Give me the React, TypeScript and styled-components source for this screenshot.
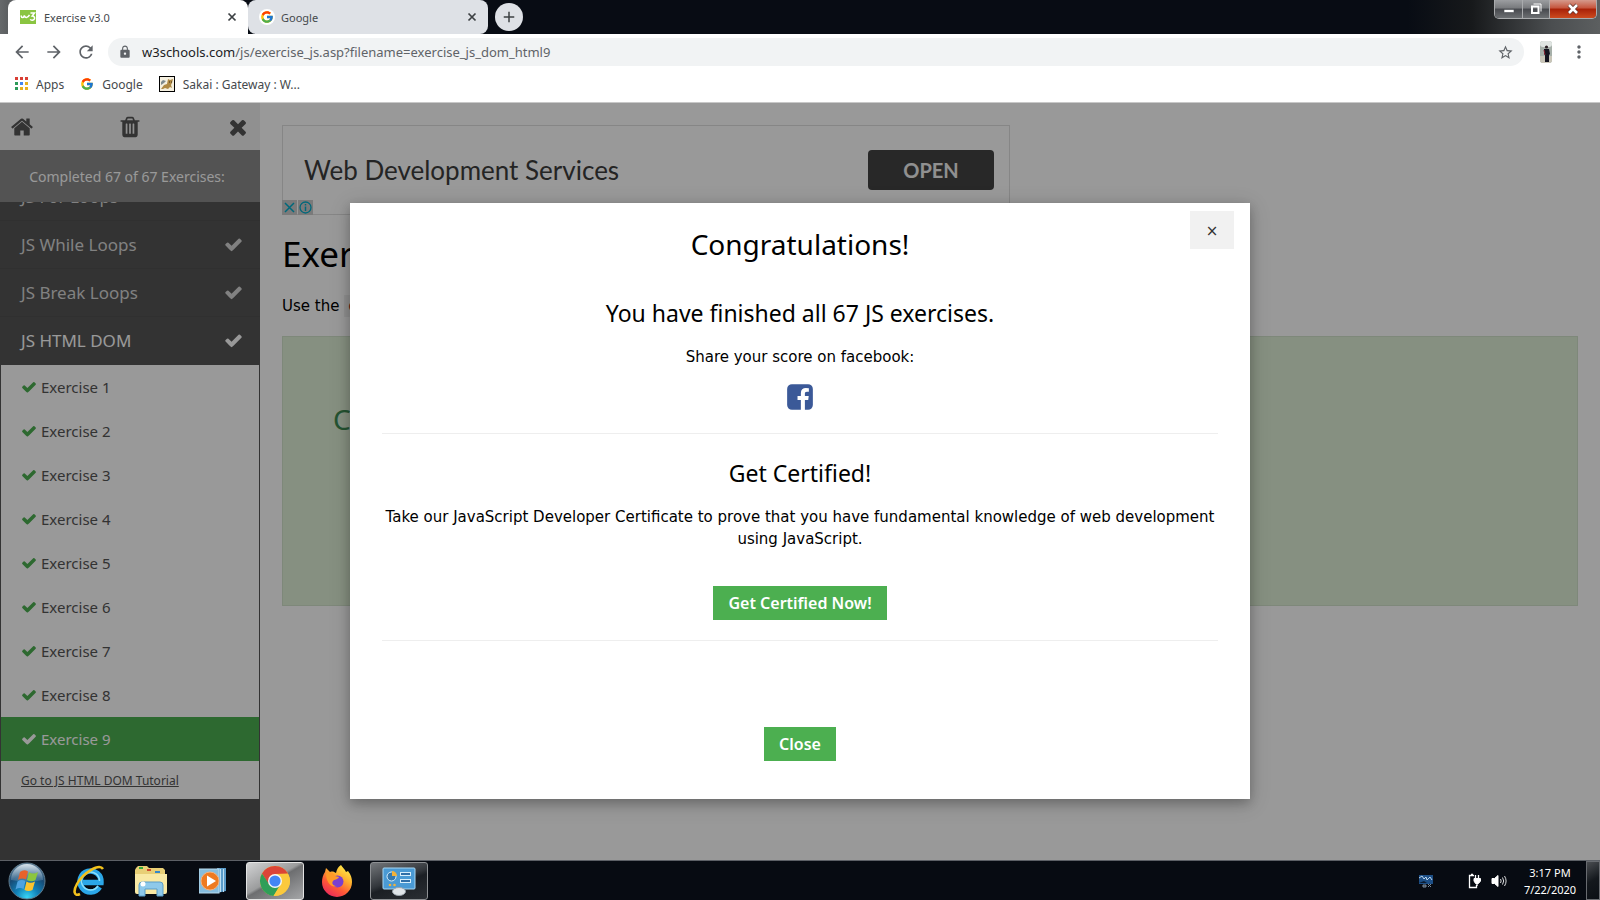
import React from "react";
import styled, { createGlobalStyle, css } from "styled-components";
import { FcGoogle } from "react-icons/fc";
import { MdArrowBack, MdArrowForward, MdRefresh, MdLock, MdStarBorder, MdMoreVert, MdAdd } from "react-icons/md";

const ui = `"Noto Sans", "Segoe UI", sans-serif`;
const body = `"DejaVu Sans", Verdana, sans-serif`;

const GlobalStyle = createGlobalStyle`
  * { box-sizing: border-box; }
  body { margin: 0; font-family: ${ui}; color: #000; background: #fff; }
  button { border: 0; padding: 0; margin: 0; background: none; font-family: inherit; cursor: pointer; }
  a { color: inherit; text-decoration: none; }
  h1, h2, h3, p, ul { margin: 0; padding: 0; font-weight: 400; }
  ul { list-style: none; }
  svg { display: block; flex: none; }
`;

const Desktop = styled.div`
  display: flex;
  flex-direction: column;
  min-height: 100vh;
`;

/* ---------- browser window ---------- */

const TabStrip = styled.div`
  display: flex;
  height: 34px;
  padding-left: 8px;
  background: linear-gradient(90deg, #66696b 0, #5c5f61 8px, #080c14 240px, #080c14 88%, #17191b 92%, #4b4e50 97%, #5c5f60 100%);
`;

const Tab = styled.div<{ $active?: boolean }>`
  display: flex;
  align-items: center;
  width: 240px;
  height: 34px;
  padding: 0 10px 0 ${(p) => (p.$active ? 12 : 11)}px;
  gap: ${(p) => (p.$active ? 8 : 6)}px;
  color: #45494d;
  font-size: 11px;
  background: ${(p) => (p.$active ? "#fff" : "#dee1e6")};
  border-radius: ${(p) => (p.$active ? "8px 8px 0 0" : "8px")};
  & > span { flex: 1; }
`;

const IconButton = styled.button`
  display: flex;
  align-items: center;
  justify-content: center;
  color: #5f6368;
`;

const NewTab = styled(IconButton)`
  width: 28px;
  height: 28px;
  margin: 3px 0 0 7px;
  border-radius: 50%;
  background: #dee1e6;
  color: #3c4043;
`;

const WindowButtons = styled.div`
  display: flex;
  height: 19px;
  margin: 0 3px 0 auto;
  border: 1px solid #a9abad;
  border-top: 0;
  border-radius: 0 0 5px 5px;
  overflow: hidden;
`;

const WindowButton = styled.button<{ $close?: boolean }>`
  display: flex;
  align-items: center;
  justify-content: center;
  width: ${(p) => (p.$close ? 47 : 27)}px;
  background: ${(p) =>
    p.$close
      ? "linear-gradient(#d59a8c 0, #c5543c 45%, #a82108 50%, #cc4a1e 100%)"
      : "linear-gradient(#9c9ea1 0, #77797c 45%, #47494e 50%, #6c6f72 100%)"};
  & + & { border-left: 1px solid #a9abad; }
`;

const Toolbar = styled.div`
  display: flex;
  align-items: center;
  height: 36px;
  padding: 0 11px 0 10px;
  background: #fff;
`;

const NavButton = styled(IconButton)`
  width: 24px;
  height: 24px;
  margin-right: 8px;
`;

const AddressBar = styled.div`
  display: flex;
  flex: 1;
  align-items: center;
  height: 28px;
  margin-left: 2px;
  padding: 0 10px;
  border-radius: 14px;
  background: #f1f3f4;
  color: #5f6368;
  font-size: 13px;
`;

const Url = styled.span`
  flex: 1;
  margin-left: 10px;
  b { color: #202124; font-weight: 400; }
`;

const Avatar = styled.span`
  margin: 0 17px 0 16px;
`;

const BookmarksBar = styled.nav`
  display: flex;
  align-items: center;
  gap: 16px;
  height: 33px;
  padding: 0 14px 4px;
  border-bottom: 1px solid #c8c8c8;
  background: #fff;
  color: #45494d;
  font-size: 12px;
`;

const Bookmark = styled.a`
  display: flex;
  align-items: center;
  gap: 8px;
`;

/* ---------- web page ---------- */

const Page = styled.div`
  position: relative;
  display: flex;
  flex: 1;
  background: #fff;
`;

const Sidebar = styled.aside`
  display: flex;
  flex-direction: column;
  width: 260px;
  background: #555;
`;

const SidebarTools = styled.div`
  display: flex;
  align-items: center;
  justify-content: space-between;
  height: 47px;
  padding: 0 10px;
  background: #f1f1f1;
`;

const ToolButton = styled(IconButton)`
  color: #555;
`;

const Completed = styled.div`
  height: 52px;
  background: #8a8a8a;
  color: #fff;
  font-size: 14px;
  line-height: 54px;
  text-align: center;
  padding-right: 6px;
`;

const Chapters = styled.div`
  display: flex;
  flex-direction: column;
  justify-content: flex-end;
  height: 163px;
  padding-bottom: 1px;
  overflow: hidden;
`;

const Chapter = styled.a<{ $open?: boolean }>`
  display: flex;
  flex: none;
  align-items: center;
  justify-content: space-between;
  height: 48px;
  padding: 0 17px 0 21px;
  border-top: 1px solid #505050;
  color: ${(p) => (p.$open ? "#fff" : "#d8d8d8")};
  font-size: 17px;
`;

const ExerciseList = styled.ul`
  margin: 0 1px;
  background: #fff;
`;

const Exercise = styled.a<{ $current?: boolean }>`
  display: flex;
  align-items: center;
  gap: 4px;
  height: 44px;
  padding-left: 20px;
  font-size: 15px;
  color: #555;
  svg { color: #4caf50; }
  ${(p) => p.$current && css`
    background: #4caf50;
    color: #fff;
    svg { color: #fff; }
  `}
`;

const TutorialLink = styled.a`
  display: block;
  height: 38px;
  padding-left: 20px;
  color: #555;
  font-size: 12px;
  line-height: 40px;
  && { text-decoration: underline; }
`;

const Main = styled.main`
  flex: 1;
  min-width: 0;
  padding: 22px 22px 0;
`;

const Ad = styled.section`
  display: flex;
  align-items: center;
  justify-content: space-between;
  position: relative;
  max-width: 728px;
  height: 90px;
  padding: 0 15px 0 21px;
  border: 1px solid #e0e0e0;
  color: #3c3c3c;
  font-family: Lato, sans-serif;
  font-size: 26px;
`;

const AdOpen = styled.button`
  width: 126px;
  height: 40px;
  border-radius: 4px;
  background: #434343;
  color: #f1f1f1;
  font-size: 20px;
  font-weight: 700;
`;

const AdBadges = styled.div`
  position: absolute;
  left: -1px;
  bottom: -1px;
  display: flex;
  gap: 1px;
  svg { background: #ccc; }
`;

const PageTitle = styled.h1`
  margin-top: 13px;
  font-size: 35px;
  line-height: 52px;
`;

const Task = styled.p`
  margin-top: 15px;
  font-family: ${body};
  font-size: 15px;
  line-height: 22px;
  code { padding: 2px 4px; background: #f1f1f1; color: #a52a2a; font-size: 15px; }
`;

const Answer = styled.section`
  height: 270px;
  margin-top: 19px;
  padding: 60px 50px;
  background: #dff0d8;
  border: 1px solid #d2e3cb;
  color: #3c8a52;
  font-size: 28px;
  line-height: 44px;
`;

/* ---------- congratulation dialog ---------- */

const Backdrop = styled.div`
  position: absolute;
  inset: 0;
  padding-top: 100px;
  background: rgba(0, 0, 0, 0.4);
`;

const Dialog = styled.div`
  position: relative;
  display: flex;
  flex-direction: column;
  align-items: center;
  max-width: 900px;
  margin: 0 auto;
  padding: 19px 32px 38px;
  background: #fff;
  box-shadow: 0 4px 10px rgba(0, 0, 0, 0.2), 0 4px 20px rgba(0, 0, 0, 0.19);
  text-align: center;
`;

const DialogX = styled.button`
  position: absolute;
  top: 8px;
  right: 16px;
  width: 44px;
  height: 38px;
  padding-top: 2px;
  background: #f1f1f1;
  color: #333;
  font-family: ${body};
  font-size: 15px;
`;

const DialogTitle = styled.h2`
  font-size: 28px;
  line-height: 44px;
`;

const Subtitle = styled.h3<{ $gap: number }>`
  margin-top: ${(p) => p.$gap}px;
  font-size: 23px;
  line-height: 36px;
`;

const Paragraph = styled.p`
  margin-top: 15px;
  font-family: ${body};
  font-size: 15px;
  line-height: 22px;
`;

const FacebookLink = styled.a`
  margin: 14px 0 1px;
  color: #3b5998;
`;

const Rule = styled.hr`
  align-self: stretch;
  margin: 20px 0 0;
  border: 0;
  border-top: 1px solid #eee;
`;

const GreenButton = styled.button<{ $gap: number }>`
  height: 34px;
  margin-top: ${(p) => p.$gap}px;
  padding: 0 15px;
  background: #4caf50;
  color: #fff;
  font-size: 16px;
  font-weight: 600;
`;

/* ---------- taskbar ---------- */

const Taskbar = styled.footer`
  display: flex;
  align-items: center;
  height: 40px;
  border-top: 1px solid #5c6066;
  background: #070b12;
`;

const StartButton = styled(IconButton)`
  width: 54px;
  margin-right: 6px;
`;

const TaskButton = styled(IconButton)<{ $state?: "active" | "open" }>`
  width: 58px;
  height: 38px;
  margin-right: 4px;
  border-radius: 3px;
  ${(p) => p.$state === "active" && css`
    border: 1px solid #e4e4e4;
    background: linear-gradient(150deg, #d2d3d4 0, #9b9c9d 45%, #6d6e70 50%, #a5a6a8 100%);
  `}
  ${(p) => p.$state === "open" && css`
    border: 1px solid #8d9093;
    background: linear-gradient(160deg, #73767a 0, #33373c 45%, #1b1f24 55%, #2a2e33 100%);
  `}
`;

const Tray = styled.div`
  display: flex;
  align-items: center;
  margin-left: auto;
  color: #fff;
`;

const TrayIcon = styled(IconButton)<{ $gap: number }>`
  margin-right: ${(p) => p.$gap}px;
`;

const Clock = styled.div`
  margin-right: 9px;
  width: 54px;
  font-size: 11px;
  line-height: 17px;
  text-align: center;
  white-space: nowrap;
`;

const ShowDesktop = styled.button`
  width: 14px;
  height: 39px;
  border: 1px solid #686b70;
  background: linear-gradient(150deg, #4a4d51, #14181d 50%, #0b0f15);
`;

/* ---------- icons ---------- */

const paths = {
  home: "M1472 992v480q0 26-19 45t-45 19h-384v-384h-256v384h-384q-26 0-45-19t-19-45v-480q0-1 .5-3t.5-3l575-474 575 474q1 2 1 6zm223-69l-62 74q-8 9-21 11h-3q-13 0-21-7l-692-577-692 577q-12 8-24 7-13-2-21-11l-62-74q-8-10-7-23.5t11-21.5l719-599q32-26 76-26t76 26l244 204v-195q0-14 9-23t23-9h192q14 0 23 9t9 23v408l219 182q10 8 11 21.5t-7 23.5z",
  trash: "M704 1376v-704q0-14-9-23t-23-9h-64q-14 0-23 9t-9 23v704q0 14 9 23t23 9h64q14 0 23-9t9-23zm256 0v-704q0-14-9-23t-23-9h-64q-14 0-23 9t-9 23v704q0 14 9 23t23 9h64q14 0 23-9t9-23zm256 0v-704q0-14-9-23t-23-9h-64q-14 0-23 9t-9 23v704q0 14 9 23t23 9h64q14 0 23-9t9-23zm-544-992h448l-48-117q-7-9-17-11h-317q-10 2-17 11zm928 32v64q0 14-9 23t-23 9h-96v948q0 83-47 143.5t-113 60.5h-832q-66 0-113-58.5t-47-141.5v-952h-96q-14 0-23-9t-9-23v-64q0-14 9-23t23-9h309l70-167q15-37 54-63t79-26h320q40 0 79 26t54 63l70 167h309q14 0 23 9t9 23z",
  times: "M1490 1322q0 40-28 68l-136 136q-28 28-68 28t-68-28l-294-294-294 294q-28 28-68 28t-68-28l-136-136q-28-28-28-68t28-68l294-294-294-294q-28-28-28-68t28-68l136-136q28-28 68-28t68 28l294 294 294-294q28-28 68-28t68 28l136 136q28 28 28 68t-28 68l-294 294 294 294q28 28 28 68z",
  check: "M1671 566q0 40-28 68l-724 724-136 136q-28 28-68 28t-68-28l-136-136-362-362q-28-28-28-68t28-68l136-136q28-28 68-28t68 28l294 295 656-657q28-28 68-28t68 28l136 136q28 28 28 68z",
  facebook: "M1376 128q119 0 203.5 84.5t84.5 203.5v960q0 119-84.5 203.5t-203.5 84.5h-188v-595h199l30-232h-229v-148q0-56 23.5-84t91.5-28l122-1v-207q-63-9-178-9-136 0-217.5 80t-81.5 226v171h-200v232h200v595h-532q-119 0-203.5-84.5t-84.5-203.5v-960q0-119 84.5-203.5t203.5-84.5h960z",
};

const Glyph = ({ name, size }: { name: keyof typeof paths; size: number }) => (
  <svg width={size} height={size} viewBox="0 0 1792 1792" fill="currentColor" aria-hidden="true">
    <path d={paths[name]} />
  </svg>
);

const W3Icon = () => (
  <svg width="16" height="16" viewBox="0 0 16 16" fill="none">
    <rect y="1" width="16" height="14" fill="#8ac541" />
    <path d="M1 6.500c.6 2.800 2.600 2.800 3.300 0 .7 2.800 3.500 2.800 5.200-.6" stroke="#fff" strokeWidth="1.500" />
    <path d="M10.500 4h4l-2.300 3c3.400 0 3 4.500-.2 4.200-1 0-1.500-.5-1.700-1" stroke="#fff" strokeWidth="1.500" />
  </svg>
);

const TabClose = () => (
  <svg width="12" height="12" viewBox="0 0 12 12" fill="none">
    <path d="M2.500 2.500l7 7M9.500 2.500l-7 7" stroke="#3c4043" strokeWidth="1.700" />
  </svg>
);

const AppsIcon = () => {
  const colors = ["#d93f35", "#d93f35", "#d93f35", "#2c9a58", "#4285f4", "#e8b020", "#2c9a58", "#e8b020", "#e8b020"];
  return (
    <svg width="14" height="14" viewBox="0 0 14 14">
      {colors.map((c, i) => (
        <rect key={i} x={(i % 3) * 5 + 1} y={Math.floor(i / 3) * 5} width="3" height="3" fill={c} />
      ))}
    </svg>
  );
};

const SakaiIcon = () => (
  <svg width="16" height="16" viewBox="0 0 16 16">
    <rect x=".5" y=".5" width="15" height="15" fill="#f5f0e0" stroke="#000" />
    <path d="M2 13l3-4 3-1 1-5 2 1 3-1-1 4-1 2 1 3-2-1-2 2-3-1-2 1z" fill="#b08a45" />
    <path d="M2 6l2-2 3 1-2 2-3 2z" fill="#7f8b90" />
    <path d="M10 6h1M12 6h1" stroke="#3d2c12" />
  </svg>
);

const AvatarIcon = () => (
  <svg width="12" height="22" viewBox="0 0 12 22">
    <rect width="12" height="22" rx="3" fill="#a7b0aa" />
    <rect width="12" height="6" rx="3" fill="#e0e5e2" />
    <path d="M0 15h12v4q0 3-3 3H3q-3 0-3-3z" fill="#c9c5b8" />
    <circle cx="6.500" cy="6" r="1.600" fill="#2b1f25" />
    <path d="M4 8h5l1 5-1 1v7H5v-7l-1-1z" fill="#15141f" />
    <path d="M4 9l1 5" stroke="#8c2536" />
  </svg>
);

const StartOrb = () => (
  <svg width="38" height="38" viewBox="0 0 38 38">
    <defs>
      <radialGradient id="orb" cx=".5" cy=".95" r=".9">
        <stop offset="0" stopColor="#38d5f5" />
        <stop offset=".35" stopColor="#1181b8" />
        <stop offset=".7" stopColor="#174a74" />
        <stop offset="1" stopColor="#5c7d97" />
      </radialGradient>
      <linearGradient id="gloss" x2="0" y2="1">
        <stop offset="0" stopColor="#e6eef4" stopOpacity=".9" />
        <stop offset="1" stopColor="#8fb0c9" stopOpacity=".25" />
      </linearGradient>
    </defs>
    <circle cx="19" cy="19" r="18" fill="url(#orb)" stroke="#5f7a8c" />
    <path d="M3 18a16 16 0 0 1 32 0q-15 3-32 0z" fill="url(#gloss)" />
    <path d="M12 10q4-3 8-.5l-2 8q-4-2-8 .5z" fill="#e8622a" />
    <path d="M21 10q4 3 9 0l-2.500 8q-4 2.500-8.500 0z" fill="#8cc63e" />
    <path d="M9.500 19.500q4-2.500 8-.5l-2 8q-4-2-8 .5z" fill="#4fa3e0" />
    <path d="M18.500 19.500q4 2.500 8.500 0l-2.500 8.500q-4 2-8 0z" fill="#fcc42e" />
  </svg>
);

const IEIcon = () => (
  <svg width="32" height="32" viewBox="0 0 32 32" fill="none">
    <path d="M26.500 22A10.500 10.500 0 1 1 28 17.500H10" stroke="#2ba7e8" strokeWidth="5.500" />
    <path d="M25 21A9 9 0 1 1 26.500 16" stroke="#8be0fb" strokeWidth="1.500" />
    <path d="M30 4c-4-6-20 4-26 15-4 7-3 13 3 10" stroke="#f2c11c" strokeWidth="2.600" />
  </svg>
);

const ExplorerIcon = () => (
  <svg width="34" height="32" viewBox="0 0 34 32">
    <path d="M2 3l2-2h9l2 2h14l2 2v22H1V5z" fill="#e8cf76" />
    <rect x="5" y="2" width="4" height="2" fill="#35a83a" />
    <rect x="13" y="4" width="4" height="2" fill="#cf4a2f" />
    <rect x="21" y="6" width="5" height="2" fill="#3588c9" />
    <path d="M1 9h32v18q0 2-2 2H3q-2 0-2-2z" fill="#f9e9a4" />
    <path d="M5 31V20q0-3 3-3h18q3 0 3 3v11h-6v-7H11v7z" fill="#8ec9ea" stroke="#5b9dc8" />
    <circle cx="9" cy="19" r="2.500" fill="#fff" />
  </svg>
);

const MediaIcon = () => (
  <svg width="28" height="26" viewBox="0 0 28 26">
    <path d="M18 0h9v23l-9 2z" fill="#5b9cc9" />
    <path d="M21.500 1v23M24.500 1v23" stroke="#bfe0f2" />
    <rect y="1" width="20" height="24" fill="#86bddd" stroke="#b9dbed" />
    <circle cx="11" cy="13" r="9" fill="#ee7a20" stroke="#f7b27a" />
    <path d="M8 7.500v11l9-5.500z" fill="#fff" />
  </svg>
);

const ChromeIcon = () => (
  <svg width="32" height="32" viewBox="0 0 32 32">
    <circle cx="16" cy="16" r="15" fill="#fbc93c" />
    <path d="M3 8.500A15 15 0 0 1 29 8.500L16 9l-6.500 10z" fill="#db4437" />
    <path d="M3 8.500A15 15 0 0 0 14.500 31L21 20l-11-1z" fill="#2f9e58" />
    <path d="M16 9h13a15 15 0 0 1-14.500 22L22 20z" fill="#fbc93c" />
    <circle cx="16" cy="16" r="7" fill="#f5f5f5" />
    <circle cx="16" cy="16" r="5.600" fill="#4285f4" />
  </svg>
);

const FirefoxIcon = () => (
  <svg width="32" height="32" viewBox="0 0 32 32">
    <defs>
      <linearGradient id="fox" x1=".8" y1="0" x2=".2" y2="1">
        <stop offset="0" stopColor="#fff14d" />
        <stop offset=".35" stopColor="#ffb02e" />
        <stop offset=".65" stopColor="#ff5a36" />
        <stop offset="1" stopColor="#e6245f" />
      </linearGradient>
    </defs>
    <path d="M20 0c1 2 4 4 5 7l2-1c3 4 4 7 4 11a15 15 0 0 1-30 0c0-4 1-7 3-10l1-4 4 4c3-1 4 0 6 1 1-4 2-6 5-8z" fill="url(#fox)" />
    <circle cx="16.500" cy="16.500" r="6" fill="#7a3fd0" />
    <path d="M5 8c4-2 8 0 9 3l4 1c-1 3-5 2-6 4-2 3 1 5 4 5-6 2-11-4-11-13z" fill="#ff9a28" />
  </svg>
);

const ControlPanelIcon = () => (
  <svg width="34" height="30" viewBox="0 0 34 30">
    <rect x="1" y="2" width="32" height="21" rx="1" fill="#4a9ad4" stroke="#a7d6f2" />
    <circle cx="9.500" cy="10.500" r="4.500" fill="#3479b0" stroke="#d7eefb" />
    <path d="M10 10V5a5 5 0 0 1 5 5z" fill="#f2b23a" />
    <g fill="#2f6fa8" stroke="#d7eefb">
      <rect x="18.500" y="6.500" width="10" height="3" />
      <rect x="18.500" y="13.500" width="10" height="3" />
    </g>
    <circle cx="8" cy="19" r="1.300" fill="#f2b23a" />
    <circle cx="12.500" cy="19" r="1.300" fill="#f2b23a" />
    <ellipse cx="17" cy="25.500" rx="6.500" ry="4" fill="#dfe4e8" stroke="#9aa4ab" />
  </svg>
);

const NetworkIcon = () => (
  <svg width="16" height="14" viewBox="0 0 16 14">
    <rect x="1" y="1" width="14" height="9" fill="#1d4f86" />
    <path d="M1 4l3-2 2 3 2-2 1 3 3-3 2 3" stroke="#b9d3ea" fill="none" />
    <path d="M1 9l5-2 3 2z" fill="#0c1c30" />
    <path d="M5 11h3v2H5zM10 10l3 3M13 10l-3 3" stroke="#7c8c9c" fill="#2f3a46" />
  </svg>
);

const PowerIcon = () => (
  <svg width="15" height="16" viewBox="0 0 15 16" fill="none" stroke="#fff">
    <path d="M7 2.500H2.500v12h7V12" strokeWidth="1.300" />
    <path d="M4 1.500h2" strokeWidth="1.500" />
    <path d="M8.500 2v4M11.500 2v4M10 10v3" strokeWidth="1.300" />
    <path d="M7 5.500h6.500V8L11.500 10.500h-3L7 8z" fill="#fff" />
  </svg>
);

const SpeakerIcon = () => (
  <svg width="16" height="14" viewBox="0 0 16 14" fill="none" stroke="#fff">
    <path d="M1 4.500h2.500L7 1.500v11L3.500 9.500H1z" fill="#fff" />
    <path d="M9.500 5q1.300 2 0 4M11.500 3.500q2.400 3.500 0 7M13.500 2q3.200 5 0 10" strokeOpacity=".85" />
  </svg>
);

const MinimizeIcon = () => (
  <svg width="12" height="12" viewBox="0 0 12 12">
    <rect x="1" y="6.500" width="10" height="3" fill="#fff" stroke="#494c50" strokeWidth=".6" />
  </svg>
);

const RestoreIcon = () => (
  <svg width="12" height="12" viewBox="0 0 12 12" fill="none" stroke="#fff">
    <path d="M3.500 1h7.500v7.500" />
    <rect x="2" y="3.500" width="6.500" height="6.500" strokeWidth="2" />
  </svg>
);

const CloseIcon = () => (
  <svg width="12" height="12" viewBox="0 0 12 12" fill="none">
    <path d="M2 2l8 8M10 2l-8 8" stroke="#5a3029" strokeWidth="4" />
    <path d="M2 2l8 8M10 2l-8 8" stroke="#fff" strokeWidth="2.600" />
  </svg>
);

const exercises = [1, 2, 3, 4, 5, 6, 7, 8, 9];

export default function App() {
  return (
    <Desktop>
      <GlobalStyle />
      <header>
        <TabStrip>
          <Tab $active>
            <W3Icon />
            <span>Exercise v3.0</span>
            <IconButton aria-label="Close Exercise tab"><TabClose /></IconButton>
          </Tab>
          <Tab>
            <svg width="16" height="16" viewBox="0 0 16 16">
              <circle cx="8" cy="8" r="8" fill="#fff" />
              <g transform="translate(1 1)"><FcGoogle size={14} /></g>
            </svg>
            <span>Google</span>
            <IconButton aria-label="Close Google tab"><TabClose /></IconButton>
          </Tab>
          <NewTab aria-label="New tab"><MdAdd size={18} /></NewTab>
          <WindowButtons>
            <WindowButton aria-label="Minimize"><MinimizeIcon /></WindowButton>
            <WindowButton aria-label="Restore"><RestoreIcon /></WindowButton>
            <WindowButton $close aria-label="Close window"><CloseIcon /></WindowButton>
          </WindowButtons>
        </TabStrip>
        <Toolbar>
          <NavButton aria-label="Back"><MdArrowBack size={20} /></NavButton>
          <NavButton aria-label="Forward"><MdArrowForward size={20} /></NavButton>
          <NavButton aria-label="Reload"><MdRefresh size={20} /></NavButton>
          <AddressBar>
            <MdLock size={14} />
            <Url><b>w3schools.com</b>/js/exercise_js.asp?filename=exercise_js_dom_html9</Url>
            <IconButton aria-label="Bookmark this page"><MdStarBorder size={17} /></IconButton>
          </AddressBar>
          <Avatar><AvatarIcon /></Avatar>
          <IconButton aria-label="Menu"><MdMoreVert size={20} /></IconButton>
        </Toolbar>
        <BookmarksBar>
          <Bookmark href="#apps"><AppsIcon />Apps</Bookmark>
          <Bookmark href="#google"><FcGoogle size={14} />Google</Bookmark>
          <Bookmark href="#sakai"><SakaiIcon />Sakai : Gateway : W...</Bookmark>
        </BookmarksBar>
      </header>

      <Page>
        <Sidebar>
          <SidebarTools>
            <ToolButton aria-label="Home"><Glyph name="home" size={24} /></ToolButton>
            <ToolButton aria-label="Reset"><Glyph name="trash" size={24} /></ToolButton>
            <ToolButton aria-label="Close menu"><Glyph name="times" size={24} /></ToolButton>
          </SidebarTools>
          <Completed>Completed 67 of 67 Exercises:</Completed>
          <Chapters>
            <Chapter href="#for">JS For Loops</Chapter>
            <Chapter href="#while">JS While Loops<Glyph name="check" size={19} /></Chapter>
            <Chapter href="#break">JS Break Loops<Glyph name="check" size={19} /></Chapter>
            <Chapter href="#dom" $open>JS HTML DOM<Glyph name="check" size={19} /></Chapter>
          </Chapters>
          <ExerciseList>
            {exercises.map((n) => (
              <li key={n}>
                <Exercise href={`#exercise${n}`} $current={n === 9}>
                  <Glyph name="check" size={16} />Exercise {n}
                </Exercise>
              </li>
            ))}
            <li><TutorialLink href="#tutorial">Go to JS HTML DOM Tutorial</TutorialLink></li>
          </ExerciseList>
        </Sidebar>
        <Main>
          <Ad>
            <span>Web Development Services</span>
            <AdOpen>OPEN</AdOpen>
            <AdBadges>
              <svg width="15" height="15" viewBox="0 0 15 15"><path d="M3 3l9 9M12 3l-9 9" stroke="#00aecd" strokeWidth="1.500" /></svg>
              <svg width="15" height="15" viewBox="0 0 15 15" fill="none" stroke="#00aecd">
                <circle cx="7.500" cy="7.500" r="5.500" strokeWidth="1.300" />
                <path d="M7.500 6.500v4.500M7.500 4v1.500" strokeWidth="1.500" />
              </svg>
            </AdBadges>
          </Ad>
          <PageTitle>Exercise:</PageTitle>
          <Task>Use the <code>eventListener</code></Task>
          <Answer>CORRECT!</Answer>
        </Main>

        <Backdrop>
          <Dialog role="dialog" aria-labelledby="dialog-title">
            <DialogX aria-label="Close dialog">×</DialogX>
            <DialogTitle id="dialog-title">Congratulations!</DialogTitle>
            <Subtitle $gap={29}>You have finished all 67 JS exercises.</Subtitle>
            <Paragraph>Share your score on facebook:</Paragraph>
            <FacebookLink href="#facebook" aria-label="Share on facebook"><Glyph name="facebook" size={30} /></FacebookLink>
            <Rule />
            <Subtitle $gap={21}>Get Certified!</Subtitle>
            <Paragraph>
              Take our JavaScript Developer Certificate to prove that you have fundamental knowledge of web development using JavaScript.
            </Paragraph>
            <GreenButton $gap={36}>Get Certified Now!</GreenButton>
            <Rule />
            <GreenButton $gap={86}>Close</GreenButton>
          </Dialog>
        </Backdrop>
      </Page>

      <Taskbar>
        <StartButton aria-label="Start"><StartOrb /></StartButton>
        <TaskButton aria-label="Internet Explorer"><IEIcon /></TaskButton>
        <TaskButton aria-label="Windows Explorer"><ExplorerIcon /></TaskButton>
        <TaskButton aria-label="Media Player"><MediaIcon /></TaskButton>
        <TaskButton $state="active" aria-label="Chrome"><ChromeIcon /></TaskButton>
        <TaskButton aria-label="Firefox"><FirefoxIcon /></TaskButton>
        <TaskButton $state="open" aria-label="Control Panel"><ControlPanelIcon /></TaskButton>
        <Tray>
          <TrayIcon $gap={33} aria-label="Network"><NetworkIcon /></TrayIcon>
          <TrayIcon $gap={9} aria-label="Power"><PowerIcon /></TrayIcon>
          <TrayIcon $gap={16} aria-label="Volume"><SpeakerIcon /></TrayIcon>
          <Clock>3:17 PM<br />7/22/2020</Clock>
          <ShowDesktop aria-label="Show desktop" />
        </Tray>
      </Taskbar>
    </Desktop>
  );
}
